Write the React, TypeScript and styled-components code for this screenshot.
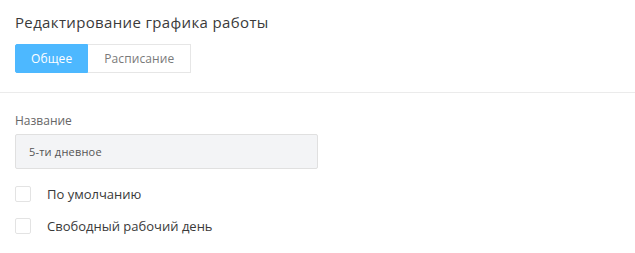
import { createGlobalStyle } from 'styled-components';
import styled from 'styled-components';
import { useState } from 'react';

const GlobalStyle = createGlobalStyle`
  body {
    margin: 0;
    background: #fff;
    font-family: 'Open Sans', 'Noto Sans', sans-serif;
    color: #333;
  }
`;

const StyledPage = styled.div`
  width: 635px;
  height: 253px;
  overflow: hidden;
`;

const StyledHeader = styled.div`
  padding: 12px 15px 19px;
  border-bottom: solid 1px #ebebeb;
`;

const StyledTitle = styled.h1`
  margin: 0 0 12px;
  font-size: 15px;
  line-height: 20px;
  font-weight: 400;
  letter-spacing: 0.35px;
  color: #3a3a3a;
`;

const StyledTabs = styled.div`
  display: flex;
`;

interface TabProps {
  isActive: boolean;
}

const StyledTab = styled.button<TabProps>`
  height: 29px;
  padding: 0 ${({ isActive }) => (isActive ? '15px' : '16px')};
  font-family: inherit;
  font-size: 12px;
  letter-spacing: 0.1px;
  border: solid 1px ${({ isActive }) => (isActive ? '#4db8ff' : '#e6e6e6')};
  border-left-width: ${({ isActive }) => (isActive ? '1px' : '0')};
  background-color: ${({ isActive }) => (isActive ? '#4db8ff' : '#fff')};
  color: ${({ isActive }) => (isActive ? '#fff' : '#7a7a7a')};
  cursor: pointer;
  &:first-child {
    border-radius: 2px 0 0 2px;
  }
`;

const StyledForm = styled.div`
  padding: 20px 15px 0;
  display: flex;
  flex-flow: column;
`;

const StyledLabel = styled.label`
  font-size: 12px;
  line-height: 16px;
  color: #666;
  margin-bottom: 5px;
`;

const StyledInput = styled.input`
  width: 303px;
  height: 35px;
  box-sizing: border-box;
  padding: 0 13px;
  background-color: #f3f4f6;
  border: solid 1px #e0e0e0;
  border-radius: 2px;
  font-family: inherit;
  font-size: 11px;
  letter-spacing: 0.2px;
  color: #555;
  outline: none;
  margin-bottom: 17px;
`;

const StyledCheckRow = styled.label`
  display: flex;
  align-items: center;
  height: 16px;
  margin-bottom: 16px;
  font-size: 13px;
  color: #3a3a3a;
  cursor: pointer;
`;

const StyledBox = styled.span<{ checked: boolean }>`
  width: 16px;
  height: 16px;
  box-sizing: border-box;
  border: solid 1px #e3e3e3;
  border-radius: 2px;
  margin-right: 16px;
  background-color: ${({ checked }) => (checked ? '#4db8ff' : '#fff')};
`;

const tabs = ['Общее', 'Расписание'];

const App = () => {
  const [selectedTab, setSelectedTab] = useState('Общее');
  const [name, setName] = useState('5-ти дневное');
  const [flags, setFlags] = useState({ byDefault: false, freeDay: false });

  return (
    <StyledPage>
      <GlobalStyle />
      <StyledHeader>
        <StyledTitle>Редактирование графика работы</StyledTitle>
        <StyledTabs>
          {tabs.map(tab => (
            <StyledTab
              key={tab}
              isActive={selectedTab === tab}
              onClick={() => setSelectedTab(tab)}
            >
              {tab}
            </StyledTab>
          ))}
        </StyledTabs>
      </StyledHeader>
      <StyledForm>
        <StyledLabel>Название</StyledLabel>
        <StyledInput value={name} onChange={e => setName(e.target.value)} />
        <StyledCheckRow
          onClick={() => setFlags({ ...flags, byDefault: !flags.byDefault })}
        >
          <StyledBox checked={flags.byDefault} />
          По умолчанию
        </StyledCheckRow>
        <StyledCheckRow
          onClick={() => setFlags({ ...flags, freeDay: !flags.freeDay })}
        >
          <StyledBox checked={flags.freeDay} />
          Свободный рабочий день
        </StyledCheckRow>
      </StyledForm>
    </StyledPage>
  );
};

export default App;
